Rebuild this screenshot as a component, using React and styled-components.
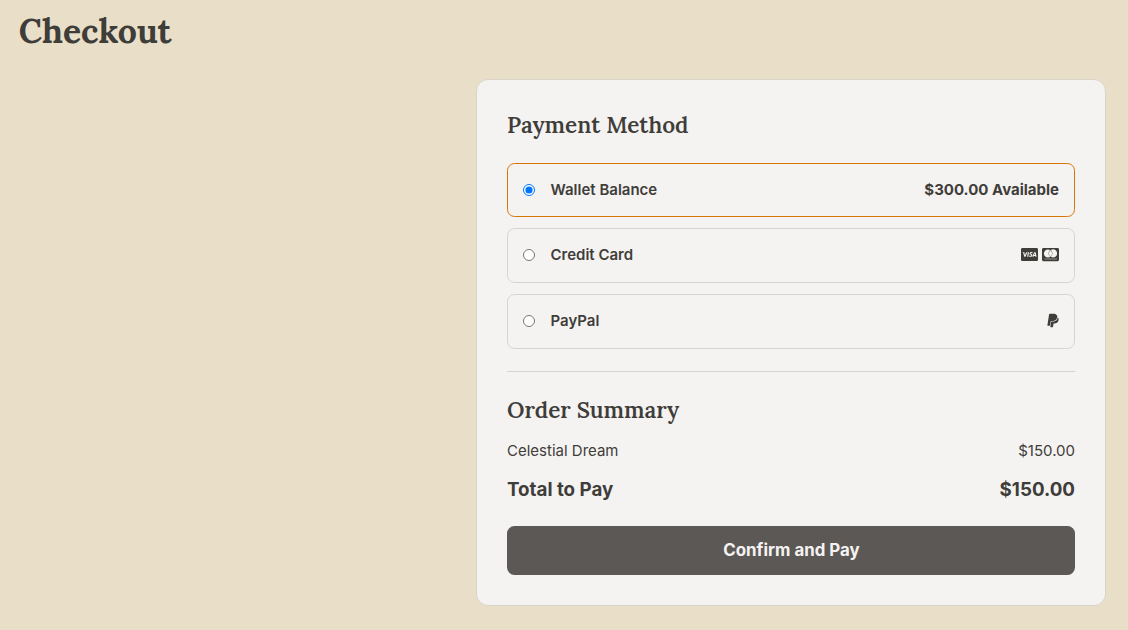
import React, { useState } from "react";
import styled, { createGlobalStyle } from "styled-components";
import { FaCcVisa, FaCcMastercard, FaPaypal } from "react-icons/fa";

const GlobalStyle = createGlobalStyle`
  *, *::before, *::after { box-sizing: border-box; }
  body {
    margin: 0;
    background: #e9dfc8;
    color: #3f3d39;
    font-family: Inter, "Liberation Sans", sans-serif;
    overflow: hidden;
  }
`;

const Page = styled.main`
  display: flex;
  flex-direction: column;
  min-height: 630px;
  padding: 8px 22px 24px 18.75px;
`;

const Title = styled.h1`
  margin: 0 0 25px;
  font: 700 33.75px/46px Lora, "Liberation Serif", serif;
  white-space: nowrap;
`;

const Card = styled.section`
  align-self: flex-end;
  width: 630px;
  height: 527px;
  padding: 30px;
  background: #f5f3f2;
  border: 1px solid #d8d4c8;
  border-radius: 12px;
`;

const Heading = styled.h2`
  margin: 0;
  font: 600 22.5px/30px Lora, "Liberation Serif", serif;
`;

const Options = styled.div`
  display: flex;
  flex-direction: column;
  gap: 11px;
  margin-top: 23px;
  padding-bottom: 22px;
  border-bottom: 1px solid #d3d3cf;
  margin-bottom: 23px;
`;

const Option = styled.label`
  display: flex;
  align-items: center;
  height: ${(p) => (p.$active ? 54 : 55)}px;
  padding: 0 15px ${(p) => (p.$active ? 1 : 2)}px;
  border: 1px solid ${(p) => (p.$active ? "#d97706" : "#d4d4d8")};
  border-radius: 7.5px;
  font-size: 15px;
  font-weight: 600;
`;

const Radio = styled.input`
  width: 12px;
  height: 12px;
  margin: 0 16px 0 -0.5px;
`;

const Trailing = styled.span`
  display: flex;
  gap: 4px;
  margin-left: auto;
  font-weight: 700;
`;

const PaypalIcon = styled(FaPaypal)`
  width: 12px;
  height: 15px;
`;

const Line = styled.div`
  display: flex;
  justify-content: space-between;
  margin-top: ${(p) => (p.$total ? 15 : 14)}px;
  font-size: ${(p) => (p.$total ? 18.75 : 15)}px;
  line-height: 24px;
  font-weight: ${(p) => (p.$total ? 700 : 400)};
`;

const PayButton = styled.button`
  display: block;
  width: 100%;
  height: 49px;
  padding: 0 0 1px 1px;
  margin-top: 24px;
  border: 0;
  border-radius: 7.5px;
  background: #5c5855;
  color: #f5f3f2;
  font: 700 16.875px/24px Inter, sans-serif;
`;

export default function App() {
  const [method, setMethod] = useState("wallet");
  const option = (id, label, trailing) => (
    <Option $active={method === id}>
      <Radio type="radio" name="method" checked={method === id} onChange={() => setMethod(id)} />
      <span>{label}</span>
      <Trailing>{trailing}</Trailing>
    </Option>
  );
  return (
    <>
      <GlobalStyle />
      <Page>
        <Title>Checkout</Title>
        <Card>
          <Heading>Payment Method</Heading>
          <Options>
            {option("wallet", "Wallet Balance", "$300.00 Available")}
            {option("card", "Credit Card", <><FaCcVisa size={17} /><FaCcMastercard size={17} /></>)}
            {option("paypal", "PayPal", <PaypalIcon />)}
          </Options>
          <Heading>Order Summary</Heading>
          <Line><span>Celestial Dream</span><span>$150.00</span></Line>
          <Line $total><span>Total to Pay</span><span>$150.00</span></Line>
          <PayButton>Confirm and Pay</PayButton>
        </Card>
      </Page>
    </>
  );
}
